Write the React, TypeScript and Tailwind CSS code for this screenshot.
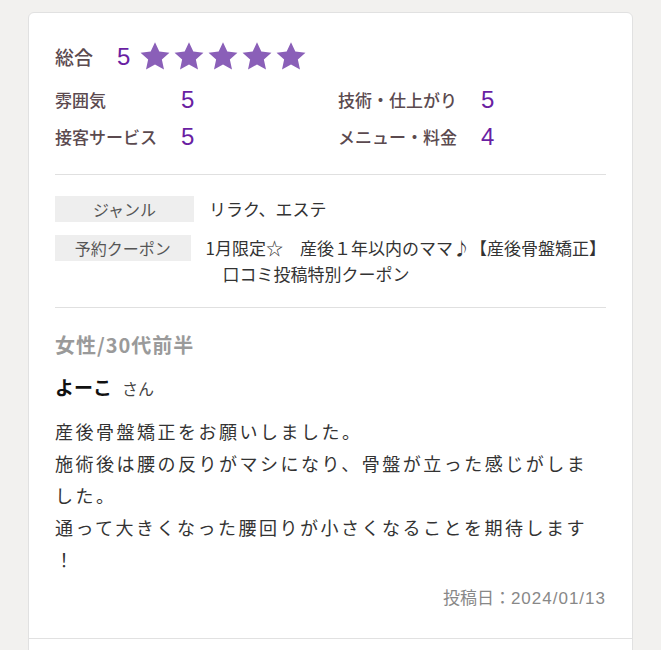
const jp = "font-['Noto_Sans_CJK_JP',sans-serif]";

// 星アイコン
const Star = () => (
  <svg width="34" height="34" viewBox="0 0 24 24" className="shrink-0">
    <path
      d="M12 1.6l3.05 6.6 7.15.8-5.35 4.85 1.5 7.05L12 17.3l-6.35 3.6 1.5-7.05L1.8 9l7.15-.8z"
      fill="#8a5fb8"
    />
  </svg>
);

const Score = ({ label, value, labelW }: { label: string; value: string; labelW: string }) => (
  <div className="flex items-center h-[30px]">
    <span className={`${labelW} text-[17px] font-medium text-[#5b4a4f]`}>{label}</span>
    <span className="font-['Liberation_Sans',sans-serif] text-[24px] leading-none text-[#6a1fa3]">{value}</span>
  </div>
);

const Divider = () => <div className="h-px bg-[#e0e0e0]" />;

function App() {
  return (
    <div className={`h-[650px] overflow-hidden bg-[#f2f1ef] pl-[28px] pr-[28px] pt-[12px] ${jp}`}>
      <div className="bg-white border border-[#e1e1e1] rounded-t-[6px]">
        <div className="px-[26px] pb-[27px]">
          {/* 評価 */}
          <div className="pt-[26px] pb-[22px]">
            <div className="flex items-center h-[36px]">
              <span className="w-[62px] text-[19px] font-medium text-[#5b4a4f]">総合</span>
              <span className="font-['Liberation_Sans',sans-serif] text-[24px] leading-none text-[#6a1fa3] mr-[8px]">5</span>
              <div className="flex">
                <Star />
                <Star />
                <Star />
                <Star />
                <Star />
              </div>
            </div>
            <div className="grid grid-cols-[283px_1fr] mt-[10px] gap-y-[7px]">
              <Score label="雰囲気" value="5" labelW="w-[126px]" />
              <Score label="技術・仕上がり" value="5" labelW="w-[143px]" />
              <Score label="接客サービス" value="5" labelW="w-[126px]" />
              <Score label="メニュー・料金" value="4" labelW="w-[143px]" />
            </div>
          </div>
          <Divider />

          {/* ジャンル・クーポン */}
          <div className="pt-[21px] pb-[20px] flex flex-col gap-[13px]">
            <div className="flex items-start">
              <div className="w-[139px] h-[26px] bg-[#eeeeee] flex items-center justify-center text-[16px] text-[#555]">ジャンル</div>
              <div className="ml-[15px] text-[17px] leading-[26px] text-[#333]">リラク、エステ</div>
            </div>
            <div className="flex items-start">
              <div className="w-[139px] h-[26px] bg-[#eeeeee] flex items-center justify-center text-[16px] text-[#555]">予約クーポン</div>
              <div className="ml-[15px] text-[17px] leading-[26px] text-[#333] whitespace-nowrap">
                1月限定☆　産後１年以内のママ♪【産後骨盤矯正】
                <br />
                {"　口コミ投稿特別クーポン"}
              </div>
            </div>
          </div>
          <Divider />

          {/* 口コミ */}
          <div className="pt-[24px]">
            <div className="text-[20px] leading-[26px] font-bold tracking-[1px] text-[#9a9a9a]">女性/30代前半</div>
            <div className="mt-[16px] flex items-baseline leading-[26px]">
              <span className="text-[19px] font-bold text-[#111]">よーこ</span>
              <span className="ml-[10px] text-[16px] text-[#444]">さん</span>
            </div>
            <p className="mt-[14px] text-[18px] leading-[32px] tracking-[2.5px] text-[#333] whitespace-nowrap">
              産後骨盤矯正をお願いしました。
              <br />
              施術後は腰の反りがマシになり、骨盤が立った感じがしま
              <br />
              した。
              <br />
              通って大きくなった腰回りが小さくなることを期待します
              <br />
              ！
            </p>
            <div className="mt-[10px] text-right text-[17px] leading-[24px] text-[#888]">
              投稿日：<span className="font-['Liberation_Sans',sans-serif] tracking-[1px]">2024/01/13</span>
            </div>
          </div>
        </div>
        <div className="border-t border-[#e1e1e1] h-[40px]" />
      </div>
    </div>
  );
}

export default App;
